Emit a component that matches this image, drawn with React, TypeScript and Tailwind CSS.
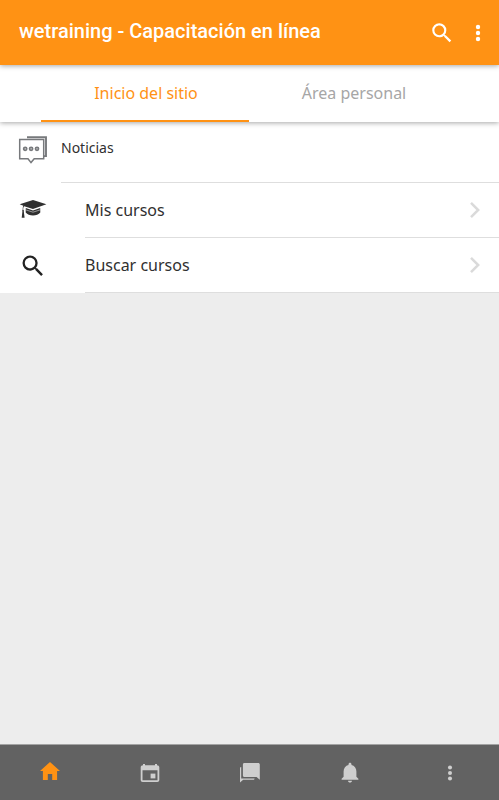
import React from 'react';

type IconProps = { className?: string };

const SearchIcon: React.FC<IconProps> = ({ className }) => (
  <svg viewBox="0 0 24 24" fill="currentColor" className={className}>
    <path d="M15.5 14h-.79l-.28-.27A6.47 6.47 0 0 0 16 9.5 6.5 6.5 0 1 0 9.5 16c1.61 0 3.09-.59 4.23-1.57l.27.28v.79l5 4.99L20.49 19l-4.99-5zm-6 0C7.01 14 5 11.99 5 9.5S7.01 5 9.5 5 14 7.01 14 9.5 11.99 14 9.5 14z" />
  </svg>
);

const MoreIcon: React.FC<IconProps> = ({ className }) => (
  <svg viewBox="0 0 24 24" fill="currentColor" className={className}>
    <circle cx="12" cy="6" r="2.2" />
    <circle cx="12" cy="12" r="2.2" />
    <circle cx="12" cy="18" r="2.2" />
  </svg>
);

const ChevronIcon: React.FC = () => (
  <svg viewBox="0 0 10 18" fill="none" stroke="#dadada" strokeWidth="2.5" className="h-[18px] w-[10px]">
    <path d="M1 1.8 8.2 9 1 16.2" />
  </svg>
);

const ForumIcon: React.FC = () => (
  <svg viewBox="0 0 30 30" fill="none" stroke="#77797c" strokeWidth="1.5" className="h-[30px] w-[30px]">
    <path d="M9 2.2h19v18.9h-2.6" strokeWidth="1.9" />
    <path d="M1.7 4.5h24v19.2H16.2L13 27.6l-3-3.9H1.7z" />
    <circle cx="7.2" cy="13.8" r="1.5" strokeWidth="1.8" />
    <circle cx="13.1" cy="13.8" r="1.5" strokeWidth="1.8" />
    <circle cx="19" cy="13.8" r="1.5" strokeWidth="1.8" />
  </svg>
);

const GraduationIcon: React.FC = () => (
  <svg viewBox="0 0 28 20" fill="#303030" className="mb-[3px] h-5 w-7">
    <path d="M14 1 27.4 5.3 14 10 5.200 7.200C4.500 7.800 4.200 9 4.200 10.800c.6.3.9.8.6 1.600l.8 6.400H2.700l.7-6.400c-.4-.7-.1-1.300.3-1.600 0-1.700.1-3 .6-4L.7 5.300z" />
    <path d="m6.800 8.900 7.200 2.700 7.200-2.700.1 4.700c-1.500 2-4.300 2.900-7.300 2.900s-5.800-.9-7.300-2.900z" />
    <path d="m6.900 10.900 7.100 2.300 7.100-2.300" fill="none" stroke="#fff" strokeWidth=".5" />
  </svg>
);

const HomeIcon: React.FC = () => (
  <svg viewBox="0 0 20 20" fill="currentColor" className="mb-[3px] h-5 w-5">
    <path d="M7.8 19v-6.1h4.4V19h4.9v-8.9H20L10 1 0 10.1h2.9V19z" />
  </svg>
);

const CalendarIcon: React.FC = () => (
  <svg viewBox="0 0 20 20" fill="currentColor" className="h-5 w-5">
    <path fillRule="evenodd" d="M3 1h2v1.200h10V1h2v1.200c1.300 0 2.300.8 2.300 2v12.700c0 1.200-.9 2-2 2H2.700c-1.200 0-2-.8-2-2V4.200c0-1.200 1-2 2.300-2zM2.500 7.200v10h15v-10z" />
    <path d="M10.600 10.600h4.800v4.800h-4.800z" />
  </svg>
);

const ChatIcon: React.FC = () => (
  <svg viewBox="0 0 22 22" fill="currentColor" className="ml-px h-[22px] w-[22px]">
    <path d="M2.200 5v11.400h13.400c0 .8-.6 1.300-1.400 1.300H4.200L1 20.600V6.400C1 5.600 1.400 5 2.200 5z" />
    <path d="M5.400 1h13.800c.9 0 1.600.7 1.600 1.600v15.200l-3.200-2.900H5.400c-.9 0-1.500-.7-1.500-1.500V2.600C3.900 1.700 4.500 1 5.400 1z" />
  </svg>
);

const BellIcon: React.FC = () => (
  <svg viewBox="0 0 18 21" fill="currentColor" className="ml-px h-[21px] w-[18px]">
    <path d="M9 20.500c1.100 0 2-.8 2-1.800H7c0 1 .9 1.800 2 1.800zM15.400 14.800V9.400c0-3.100-2-5.700-4.900-6.400v-.6C10.500 1.500 9.800.8 9 .8s-1.500.7-1.500 1.600V3C4.600 3.700 2.600 6.300 2.600 9.400v5.400L.6 16.700v1h16.800v-1z" />
  </svg>
);

const courseLinks = [
  { label: 'Mis cursos', icon: <GraduationIcon /> },
  { label: 'Buscar cursos', icon: <SearchIcon className="h-7 w-7 text-[#222]" /> },
];

const App: React.FC = () => {
  return (
    <div className="flex h-screen flex-col bg-[#ededed] font-['Noto_Sans',sans-serif] text-[#303030]">
      <header className="z-20 flex h-[65px] shrink-0 items-center bg-[#ff9214] pr-[9px] pl-[19px] text-white shadow-[0_1px_5px_rgba(0,0,0,0.35)]">
        <h1 className="flex-1 pb-[3px] font-['Roboto',sans-serif] text-[20px] font-medium whitespace-nowrap">wetraining - Capacitación en línea</h1>
        <SearchIcon className="mr-[11px] h-[26px] w-[26px]" />
        <MoreIcon className="h-6 w-6" />
      </header>

      <nav className="z-10 flex h-[57px] shrink-0 bg-white px-[41px] text-[16px] shadow-[0_1px_5px_rgba(0,0,0,0.35)]">
        <button className="w-[208px] border-b-2 border-[#ff9214] pt-px pl-[2px] text-[#ff9214]">Inicio del sitio</button>
        <button className="w-[209px] border-b-2 border-transparent pt-px pl-px text-[#a6a6a6]">Área personal</button>
      </nav>

      <main className="flex-1">
        <div className="flex h-[61px] bg-white pl-[18px]">
          <div className="w-[43px] pt-[13px]">
            <ForumIcon />
          </div>
          <div className="flex-1 border-b border-[#dedede] pt-[16px] text-[14px] leading-5">Noticias</div>
        </div>
        {courseLinks.map((link) => (
          <div key={link.label} className="flex h-[55px] bg-white pl-[19px]">
            <div className="flex w-[66px] items-center">{link.icon}</div>
            <div className="flex flex-1 items-center justify-between border-b border-[#dedede] pr-[19px] text-[16px]">
              {link.label}
              <ChevronIcon />
            </div>
          </div>
        ))}
      </main>

      <footer className="grid h-[56px] shrink-0 grid-cols-5 items-center justify-items-center border-t border-[#a3a3a3] bg-[#626262] text-[#cfcfcf]">
        <span className="text-[#ff9214]"><HomeIcon /></span>
        <CalendarIcon />
        <ChatIcon />
        <BellIcon />
        <MoreIcon className="ml-px h-[22px] w-[22px]" />
      </footer>
    </div>
  );
};

export default App;
